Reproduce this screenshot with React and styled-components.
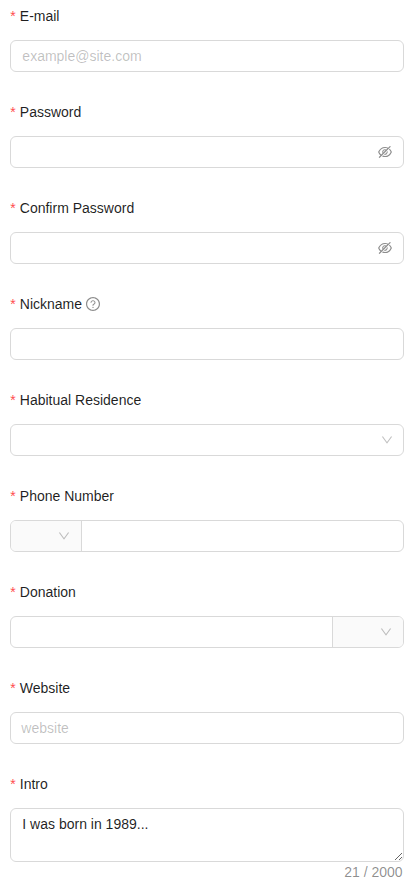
import React from 'react';
import styled, { createGlobalStyle, css } from 'styled-components';
import { AiOutlineDown, AiOutlineEyeInvisible, AiOutlineQuestionCircle } from 'react-icons/ai';

const ICON_BOX = '64 64 896 896';

const GlobalStyle = createGlobalStyle`
  *, *::before, *::after { box-sizing: border-box; }
  body {
    margin: 0;
    background: #fff;
    color: rgba(0, 0, 0, 0.88);
    font-family: "Liberation Sans", Arial, sans-serif;
    font-size: 14px;
    line-height: 22px;
  }
`;

const Form = styled.form`
  display: flex;
  flex-direction: column;
  gap: 24px;
  padding: 0 2.5%;
`;

const Item = styled.div`
  display: flex;
  flex-direction: column;
  gap: 8px;
`;

const Label = styled.label`
  display: flex;
  align-items: center;
  height: 32px;

  &::before {
    content: "*";
    margin-right: 4px;
    color: #ff4d4f;
    line-height: 1;
  }
`;

const HelpIcon = styled(AiOutlineQuestionCircle)`
  margin-left: 4px;
  color: rgba(0, 0, 0, 0.45);
`;

const Field = styled.div`
  display: flex;
  align-items: stretch;
  height: 32px;
  border: 1px solid #d9d9d9;
  border-radius: 6px;
  background: #fff;
`;

const Input = styled.input`
  flex: 1;
  min-width: 0;
  padding: 4px ${(p) => p.$inset ?? 11}px;
  border: 0;
  outline: 0;
  background: transparent;
  color: inherit;
  font: inherit;

  &::placeholder { color: rgba(0, 0, 0, 0.25); }
`;

const Suffix = styled.span`
  display: flex;
  align-items: center;
  padding-right: 11px;
  color: rgba(0, 0, 0, 0.45);
`;

const Arrow = styled(AiOutlineDown)`
  color: rgba(0, 0, 0, 0.25);
`;

const SelectBox = styled.div`
  flex: 1;
  display: flex;
  align-items: center;
  justify-content: flex-end;
  padding-right: ${(p) => p.$inset ?? 10}px;
`;

const Addon = styled.div`
  flex: none;
  display: flex;
  width: 71px;
  background: #fafafa;
  ${(p) => p.$side === 'left'
    ? css`
        border-right: 1px solid #d9d9d9;
        border-radius: 5px 0 0 5px;
      `
    : css`
        border-left: 1px solid #d9d9d9;
        border-radius: 0 5px 5px 0;
      `}
`;

const TextArea = styled.textarea`
  display: block;
  width: 100%;
  height: 54px;
  padding: 4px 11px;
  border: 1px solid #d9d9d9;
  border-radius: 6px;
  outline: 0;
  background: #fff;
  color: inherit;
  font: inherit;
  resize: vertical;
`;

const Intro = styled.div`
  display: flex;
  flex-direction: column;
`;

const Count = styled.span`
  align-self: flex-end;
  margin-right: 1px;
  height: 22px;
  margin-top: -1px;
  color: rgba(0, 0, 0, 0.45);
`;

function FormItem({ label, help, children }) {
  return (
    <Item>
      <Label>
        {label}
        {help && <HelpIcon size={14} viewBox={ICON_BOX} />}
      </Label>
      {children}
    </Item>
  );
}

function PasswordField() {
  return (
    <Field>
      <Input type="password" />
      <Suffix><AiOutlineEyeInvisible size={14} viewBox={ICON_BOX} /></Suffix>
    </Field>
  );
}

function AddonSelect({ side }) {
  return (
    <Addon $side={side}>
      <SelectBox $inset={11}><Arrow size={12} viewBox={ICON_BOX} /></SelectBox>
    </Addon>
  );
}

export default function App() {
  return (
    <>
      <GlobalStyle />
      <Form>
        <FormItem label="E-mail">
          <Field><Input placeholder="example@site.com" /></Field>
        </FormItem>
        <FormItem label="Password"><PasswordField /></FormItem>
        <FormItem label="Confirm Password"><PasswordField /></FormItem>
        <FormItem label="Nickname" help>
          <Field><Input /></Field>
        </FormItem>
        <FormItem label="Habitual Residence">
          <Field>
            <SelectBox><Arrow size={12} viewBox={ICON_BOX} /></SelectBox>
          </Field>
        </FormItem>
        <FormItem label="Phone Number">
          <Field>
            <AddonSelect side="left" />
            <Input />
          </Field>
        </FormItem>
        <FormItem label="Donation">
          <Field>
            <Input />
            <AddonSelect side="right" />
          </Field>
        </FormItem>
        <FormItem label="Website">
          <Field><Input placeholder="website" $inset={10} /></Field>
        </FormItem>
        <FormItem label="Intro">
          <Intro>
            <TextArea defaultValue="I was born in 1989..." />
            <Count>21 / 2000</Count>
          </Intro>
        </FormItem>
      </Form>
    </>
  );
}
